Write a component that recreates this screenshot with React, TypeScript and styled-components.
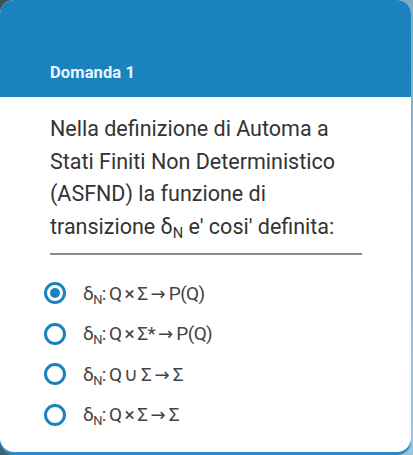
import React from "react";
import styled, { createGlobalStyle } from "styled-components";

const Global = createGlobalStyle`
  html, body { margin: 0; padding: 0; }
  body {
    width: 413px;
    height: 455px;
    overflow: hidden;
    background: linear-gradient(100deg, #3f4f5c 0%, #5f7f96 55%, #9cc6de 100%);
    font-family: Roboto, "Noto Sans", Arial, sans-serif;
  }
`;

const Card = styled.div`
  width: 411px;
  height: 452px;
  border-radius: 14px;
  overflow: hidden;
  background: #ffffff;
  display: flex;
  flex-direction: column;
  box-shadow: 0 3px 0 #2a8ad0;
`;

const Header = styled.div`
  height: 97px;
  background: #1a82bd;
  display: flex;
  align-items: flex-end;
  padding: 0 0 15px 50px;
  box-sizing: border-box;
`;

const Title = styled.div`
  color: #e8f6ff;
  font-size: 16.5px;
  font-weight: 700;
  letter-spacing: 0.1px;
`;

const Body = styled.div`
  padding: 16px 50px 0 50px;
  display: flex;
  flex-direction: column;
`;

const Question = styled.div`
  color: #333333;
  font-size: 21.5px;
  line-height: 32.5px;
`;

const Sub = styled.sub`
  font-size: 0.68em;
  vertical-align: -0.28em;
  line-height: 0;
`;

const Rule = styled.div`
  margin-top: 10px;
  width: 312px;
  height: 2px;
  background: #8a8a8a;
`;

const Options = styled.div`
  display: flex;
  flex-direction: column;
  gap: 18.5px;
  margin-top: 27px;
`;

const Option = styled.label`
  display: flex;
  align-items: center;
  gap: 17px;
  height: 22px;
  margin-left: -6px;
`;

const Radio = styled.span<{ $checked?: boolean }>`
  width: 16px;
  height: 16px;
  border-radius: 50%;
  border: 3px solid #1a82bd;
  display: flex;
  align-items: center;
  justify-content: center;
  flex-shrink: 0;
  &::after {
    content: "";
    width: 10px;
    height: 10px;
    border-radius: 50%;
    background: ${(p) => (p.$checked ? "#1a82bd" : "transparent")};
  }
`;

const OptText = styled.span`
  color: #444444;
  font-size: 19px;
  letter-spacing: -0.6px;
  word-spacing: -1px;
  white-space: nowrap;
`;

const Arrow = styled.span`
  font-family: "DejaVu Sans", sans-serif;
  font-size: 0.95em;
  letter-spacing: 0;
`;

const options: [string, string][] = [
  ["Q × Σ", "P(Q)"],
  ["Q × Σ*", "P(Q)"],
  ["Q ∪ Σ", "Σ"],
  ["Q × Σ", "Σ"],
];

export default function App() {
  return (
    <>
      <Global />
      <Card>
        <Header>
          <Title>Domanda 1</Title>
        </Header>
        <Body>
          <Question>
            Nella definizione di Automa a Stati Finiti Non Deterministico (ASFND) la funzione di
            transizione δ<Sub>N</Sub> e' cosi' definita:
          </Question>
          <Rule />
          <Options>
            {options.map(([a, b], i) => (
              <Option key={i}>
                <Radio $checked={i === 0} />
                <OptText>
                  δ<Sub>N</Sub>: {a} <Arrow>→</Arrow> {b}
                </OptText>
              </Option>
            ))}
          </Options>
        </Body>
      </Card>
    </>
  );
}
